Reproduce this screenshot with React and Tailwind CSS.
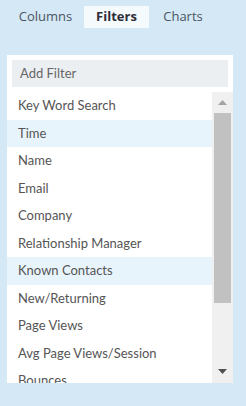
import React from "react";

const items = [
  ["Key Word Search", false],
  ["Time", true],
  ["Name", false],
  ["Email", false],
  ["Company", false],
  ["Relationship Manager", false],
  ["Known Contacts", true],
  ["New/Returning", false],
  ["Page Views", false],
  ["Avg Page Views/Session", false],
  ["Bounces", false],
];

export default function App() {
  return (
    <div className="w-[246px] h-[406px] bg-[#d5e8f5] overflow-hidden">
      <div className="flex h-[28px] pt-[6px] pl-[7px] text-[13px] font-['Open_Sans',sans-serif] text-[#4a5563]">
        <div className="w-[77px] h-[22px] flex items-center justify-center">Columns</div>
        <div className="w-[65px] h-[22px] flex items-center justify-center bg-[#f5fafd] font-bold text-[#2e2e38]">Filters</div>
        <div className="w-[68px] h-[22px] flex items-center justify-center">Charts</div>
      </div>
      <div className="ml-[7px] mt-[27px] w-[226px] h-[328px] bg-white flex flex-col">
        <div className="mx-[5px] mt-[5px] h-[27px] bg-[#eceff2] flex items-center pl-[8px] text-[13px] text-[#666] font-['Lato',sans-serif]">
          Add Filter
        </div>
        <div className="mt-[5px] flex flex-1 min-h-0">
          <div className="flex-1 overflow-hidden font-['Lato',sans-serif] text-[13px] text-[#555]">
            {items.map(([t, hl]) => (
              <div key={t} className={`h-[27.5px] flex items-center pl-[11px] ${hl ? "bg-[#e8f4fb]" : ""}`}>
                {t}
              </div>
            ))}
          </div>
          <div className="w-[21px] bg-[#f0f0f0] flex flex-col items-center">
            <div className="h-[21px] flex items-center justify-center">
              <svg width="9" height="5" viewBox="0 0 9 5"><path d="M4.5 0 L9 5 L0 5 Z" fill="#a3a3a3" /></svg>
            </div>
            <div className="w-[17px] h-[190px] bg-[#c1c1c1]" />
            <div className="flex-1" />
            <div className="h-[21px] flex items-center justify-center mb-[1px]">
              <svg width="9" height="5" viewBox="0 0 9 5"><path d="M0 0 L9 0 L4.5 5 Z" fill="#505050" /></svg>
            </div>
          </div>
        </div>
      </div>
    </div>
  );
}
